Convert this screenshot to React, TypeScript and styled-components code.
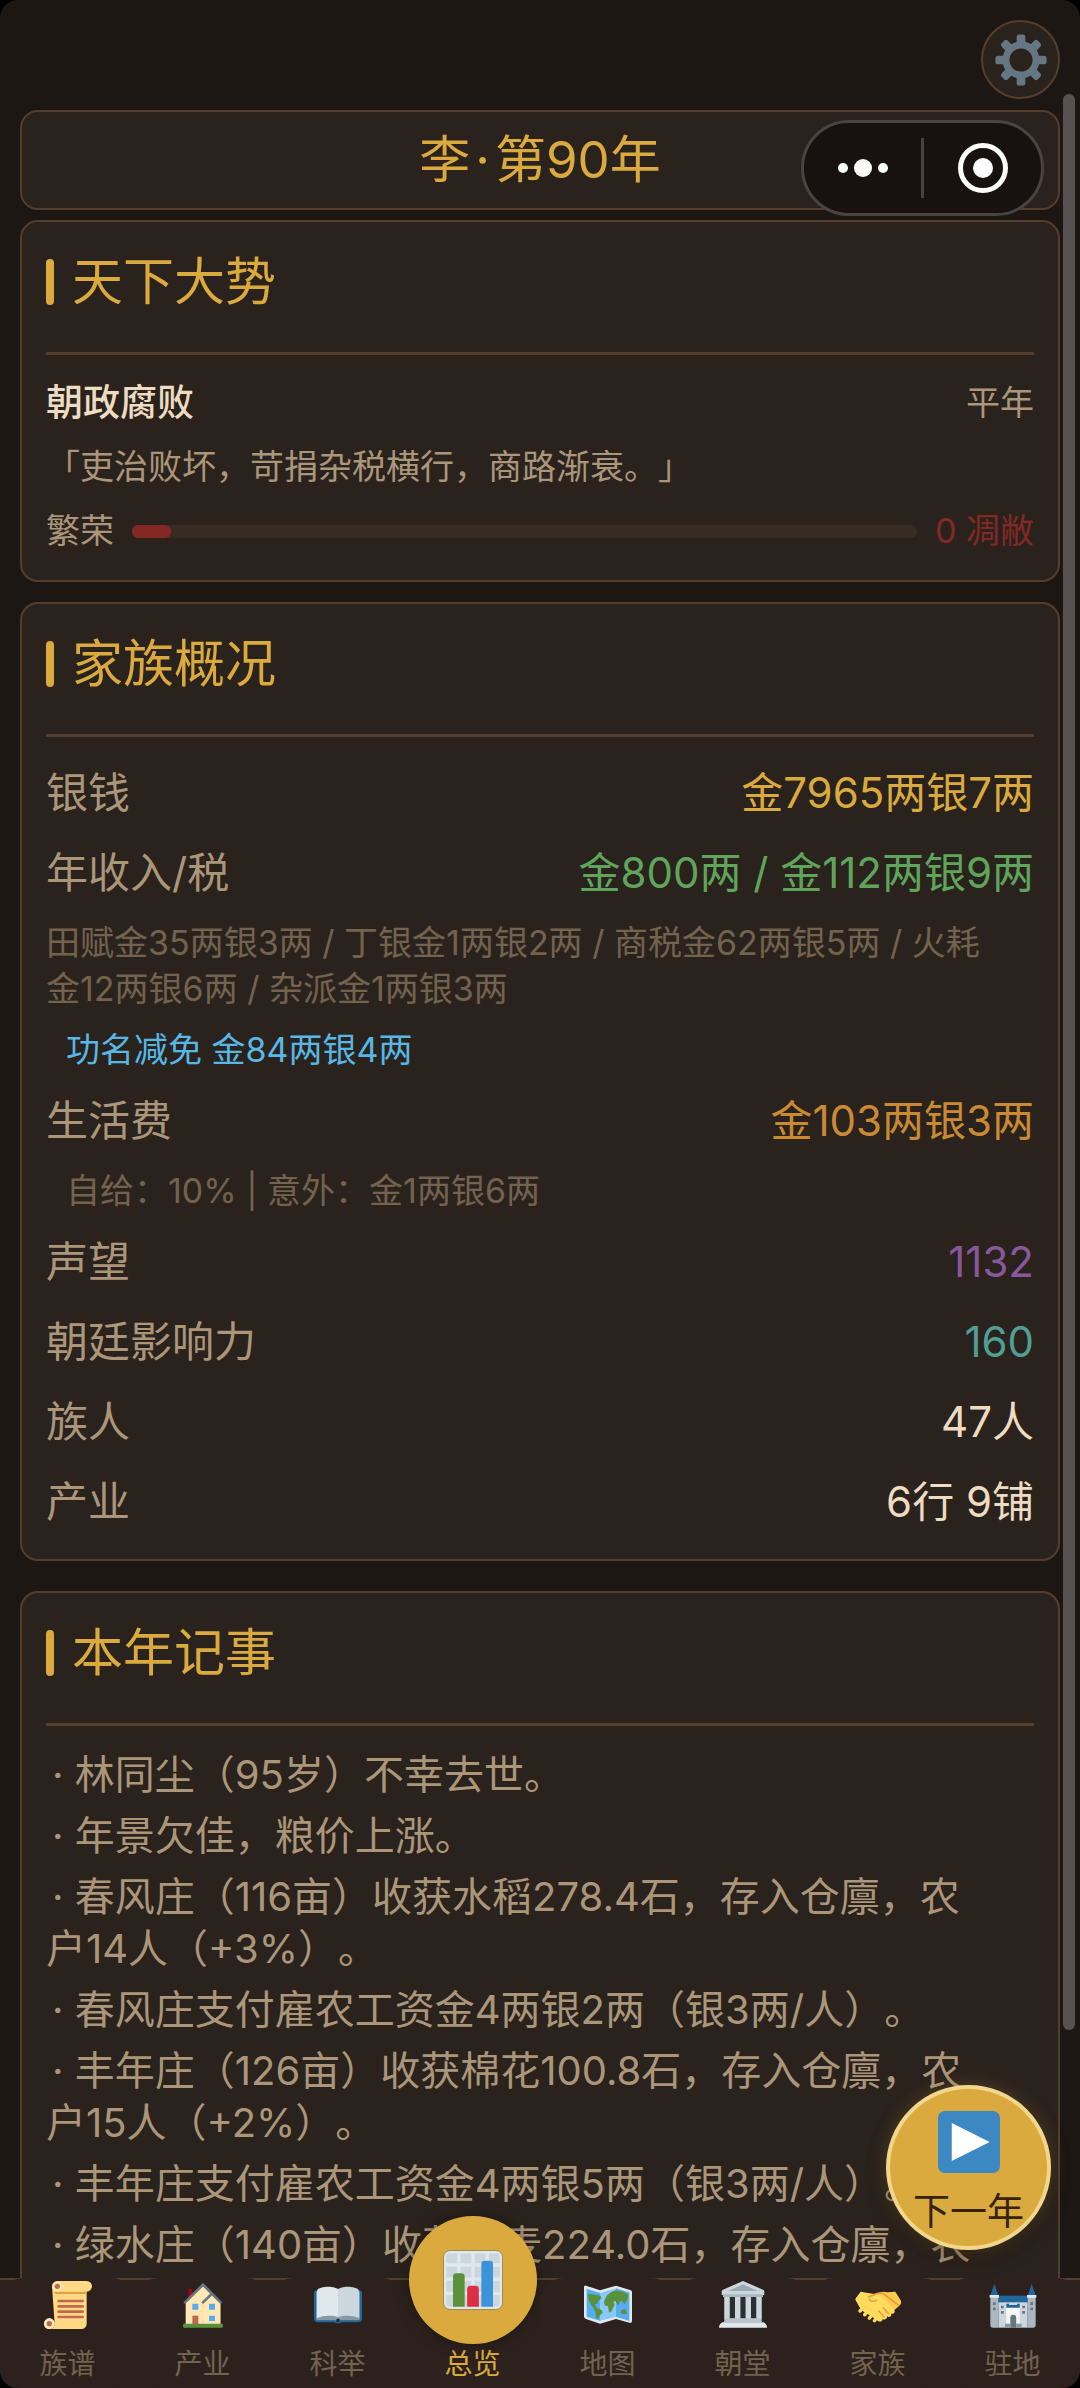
import React from "react";
import styled, { createGlobalStyle, css } from "styled-components";

const color = {
  page: "#1c1713",
  card: "#2a221d",
  line: "#543e2d",
  gold: "#daaa3e",
  label: "#ab967a",
  muted: "#73634e",
  cream: "#eddcc2",
  green: "#5fa55b",
  orange: "#c98a33",
  purple: "#87599b",
  teal: "#509e94",
  blue: "#57b8e6",
  red: "#832823",
};

const GlobalStyle = createGlobalStyle`
  *, *::before, *::after { box-sizing: border-box; }
  body {
    margin: 0;
    background: #000;
    font-family: Inter, "Noto Sans CJK SC", sans-serif;
    text-spacing-trim: space-all;
  }
  button { font-family: inherit; padding: 0; border: 0; cursor: pointer; }
  h1, h2, p, dl, dd, ul { margin: 0; padding: 0; font-weight: 400; }
`;

const Screen = styled.div`
  position: relative;
  display: flex;
  flex-direction: column;
  height: 100vh;
  overflow: hidden;
  border-radius: 18px;
  background: ${color.page};
`;

const Main = styled.main`
  flex: 1;
  min-height: 0;
  display: flex;
  flex-direction: column;
  padding: 20px 20px 0;
  overflow-y: auto;
  scrollbar-width: none;
`;

const TopBar = styled.div`
  display: flex;
  justify-content: flex-end;
  flex-shrink: 0;
  margin-bottom: 11px;
`;

const SettingsButton = styled.button`
  display: grid;
  place-items: center;
  width: 79px;
  height: 79px;
  border: 2px solid ${color.line};
  border-radius: 50%;
  background: ${color.card};
`;

const Panel = styled.section<{ $gap?: number; $grow?: boolean }>`
  flex-shrink: 0;
  margin-bottom: ${(p) => p.$gap ?? 0}px;
  padding: 22px 24px 17px;
  border: 2px solid ${color.line};
  border-radius: 18px;
  background: ${color.card};
  ${(p) =>
    p.$grow &&
    css`
      flex-grow: 1;
      border-bottom: 0;
      border-radius: 18px 18px 0 0;
    `}
`;

const YearBar = styled.header`
  flex-shrink: 0;
  margin-bottom: 10px;
  border: 2px solid ${color.line};
  border-radius: 18px;
  background: ${color.card};
`;

const YearTitle = styled.h1`
  display: flex;
  justify-content: center;
  gap: 5px;
  font-size: 51px;
  line-height: 96px;
  color: ${color.gold};
`;

const PanelHead = styled.div`
  display: flex;
  align-items: center;
  gap: 18px;
  margin-bottom: 16px;
  padding-bottom: 32px;
  border-bottom: 3px solid ${color.line};
  &::before {
    content: "";
    width: 8px;
    height: 46px;
    border-radius: 4px;
    background: ${color.gold};
  }
`;

const PanelTitle = styled.h2`
  font-size: 51px;
  line-height: 76px;
  color: ${color.gold};
`;

const TrendRow = styled.div`
  display: flex;
  align-items: center;
  justify-content: space-between;
  gap: 18px;
  font-size: 34px;
  line-height: 64px;
  color: ${color.label};
`;

const Era = styled.span`
  font-size: 37px;
  font-weight: 500;
  color: ${color.cream};
`;

const Track = styled.div`
  flex: 1;
  height: 13px;
  border-radius: 6px;
  background: #372b22;
`;

const Fill = styled.div`
  height: 100%;
  border-radius: 6px;
  background: ${color.red};
`;

const Verdict = styled.span`
  color: ${color.red};
`;

const StatRow = styled.div`
  display: flex;
  justify-content: space-between;
  font-size: 42px;
  line-height: 80px;
`;

const StatLabel = styled.dt`
  color: ${color.label};
`;

const StatValue = styled.dd<{ $color: string }>`
  color: ${(p) => p.$color};
`;

const Note = styled.p<{ $indent?: boolean; $color?: string }>`
  padding: 7px 40px 8px ${(p) => (p.$indent ? 20 : 0)}px;
  font-size: 34px;
  line-height: 46px;
  color: ${(p) => p.$color ?? color.muted};
`;

const EventList = styled.ul`
  padding: 7px 44px 0 0;
  list-style: none;
  font-size: 40px;
  line-height: 52px;
  color: ${color.label};
`;

const EventItem = styled.li`
  margin-bottom: 9px;
  text-indent: 6px;
`;

const Capsule = styled.div`
  position: absolute;
  top: 120px;
  right: 36px;
  display: grid;
  grid-template-columns: 1fr 3px 1fr;
  align-items: center;
  width: 243px;
  height: 96px;
  border: 3px solid #484441;
  border-radius: 48px;
  background: rgba(22, 17, 15, 0.94);
`;

const CapsuleButton = styled.button`
  display: grid;
  place-items: center;
  height: 90px;
  background: none;
`;

const CapsuleRule = styled.span`
  height: 60px;
  background: #484441;
`;

const ScrollThumb = styled.div`
  position: absolute;
  top: 94px;
  right: 5px;
  bottom: 358px;
  width: 12px;
  border-radius: 6px;
  background: #575252;
`;

const NextYearButton = styled.button`
  position: absolute;
  right: 29px;
  bottom: 138px;
  display: flex;
  flex-direction: column;
  align-items: center;
  gap: 14px;
  width: 165px;
  height: 165px;
  padding-top: 22px;
  border: 4px solid #f0d78c;
  border-radius: 50%;
  background: ${color.gold};
  box-shadow: 0 0 18px rgba(218, 170, 62, 0.25), 0 8px 20px rgba(0, 0, 0, 0.35);
  font-size: 37px;
  line-height: 50px;
  color: #36240a;
  white-space: nowrap;
`;

const NavBar = styled.nav`
  display: grid;
  grid-template-columns: repeat(8, 1fr);
  flex-shrink: 0;
  border-top: 2px solid ${color.line};
  background: #2c211d;
`;

const NavItem = styled.button<{ $active?: boolean }>`
  position: relative;
  display: flex;
  flex-direction: column;
  align-items: center;
  gap: 15px;
  margin-top: -2px;
  padding: 3px 0 4px;
  border-radius: 24px;
  background: #2c211d;
  font-size: 28px;
  line-height: 40px;
  color: ${(p) => (p.$active ? color.gold : color.muted)};
`;

const IconSlot = styled.span`
  display: grid;
  place-items: center;
  height: 48px;
`;

const ActiveDisc = styled.span`
  position: absolute;
  top: -62px;
  left: 50%;
  display: grid;
  place-items: center;
  width: 128px;
  height: 128px;
  margin-left: -64px;
  border-radius: 50%;
  background: ${color.gold};
  box-shadow: 0 0 16px rgba(0, 0, 0, 0.35);
`;

const Svg = ({ size, children }: { size: number; children: React.ReactNode }) => (
  <svg width={size} height={size} viewBox="0 0 36 36" aria-hidden="true">
    {children}
  </svg>
);

const GearIcon = () => (
  <Svg size={52}>
    <g fill="#667784">
      {[0, 45, 90, 135, 180, 225, 270, 315].map((a) => (
        <rect key={a} x="15" y="0.3" width="6" height="9" rx="1.8" transform={`rotate(${a} 18 18)`} />
      ))}
    </g>
    <circle cx="18" cy="18" r="10.4" fill="none" stroke="#667784" strokeWidth="4.8" />
  </Svg>
);

const DotsIcon = () => (
  <svg width="52" height="20" viewBox="0 0 52 20" aria-hidden="true" fill="#fff">
    <circle cx="6" cy="10" r="5" />
    <circle cx="26" cy="10" r="9" />
    <circle cx="46" cy="10" r="5" />
  </svg>
);

const TargetIcon = () => (
  <svg width="50" height="50" viewBox="0 0 50 50" aria-hidden="true">
    <circle cx="25" cy="25" r="22.5" fill="none" stroke="#fff" strokeWidth="5" />
    <circle cx="25" cy="25" r="10" fill="#fff" />
  </svg>
);

const PlayIcon = () => (
  <Svg size={62}>
    <rect width="36" height="36" rx="4" fill="#3b88c3" />
    <path d="M8 7l22 11L8 29z" fill="#fff" />
  </Svg>
);

const ScrollIcon = () => (
  <Svg size={48}>
    <circle cx="4" cy="32" r="4" fill="#ffe8b6" />
    <path d="M6 4h26v28a4 4 0 0 1-4 4H4c3 0 4-2 4-4L6 4z" fill="#ffd983" />
    <path d="M8 8h24v1.8H8z" fill="#e39f3d" />
    <path d="M10 0h22a4 4 0 0 1 0 8H10z" fill="#ffd983" />
    <circle cx="10" cy="4" r="4" fill="#ffe8b6" />
    <circle cx="10" cy="4" r="2" fill="#c1694f" />
    <circle cx="4" cy="32" r="4" fill="#ffe8b6" />
    <circle cx="4" cy="32" r="2" fill="#c1694f" />
    <path d="M11 15h18M11 19h18M11 23h18M11 27h18" stroke="#c1694f" strokeWidth="2" strokeLinecap="round" />
  </Svg>
);

const HouseIcon = () => (
  <Svg size={48}>
    <path d="M7 6h3v8H7z" fill="#a0041e" />
    <path d="M5 15L18 2l13 13v18H5z" fill="#ffe8b6" />
    <path d="M17.5 15.5L24 10v23h-6.500z" fill="#ffd983" opacity="0.6" />
    <path d="M18.500 16L25 9.500l6 6V33H18.500z" fill="#ffe8b6" />
    <path d="M4.500 16L18 2.800l13.200 13.200M18 16l6.500-6.300" fill="none" stroke="#66757f" strokeWidth="2" strokeLinecap="round" />
    <path d="M10 17h4.500v4.500H10zM22.500 17H27v4.500h-4.500zM22.500 26H27v4h-4.500z" fill="#55acee" />
    <path d="M10 26h4.500v7H10z" fill="#c1694f" />
    <rect x="3" y="32" width="30" height="3" rx="1" fill="#5c913b" />
  </Svg>
);

const BookIcon = () => (
  <Svg size={48}>
    <path d="M2 7h32a2 2 0 0 1 2 2v19a3 3 0 0 1-3 3H20.500c-.5 1.200-4.500 1.200-5 0H3a3 3 0 0 1-3-3V9a2 2 0 0 1 2-2z" fill="#226699" />
    <path d="M2 8h32v21H2z" fill="#99aab5" />
    <path d="M3 6c5-2.500 11-2 15 0v21c-4-1.500-10-1.500-16 1V8z" fill="#e1e8ed" />
    <path d="M33 6c-5-2.500-11-2-15 0v21c4-1.500 10-1.500 16 1V8z" fill="#ccd6dd" />
    <path d="M2 28c6-2.500 12-2.500 16 0 4-2.500 10-2.500 16 0v1.500H20l-2 1-2-1H2z" fill="#8899a6" />
    <circle cx="18" cy="29.500" r="1.400" fill="#292f33" />
  </Svg>
);

const ChartIcon = () => (
  <Svg size={60}>
    <rect x="0.300" y="0.300" width="35.400" height="35.400" rx="4" fill="#e1e8ed" stroke="#a08a4f" strokeWidth="0.600" />
    <path d="M4 2h4.500v6H2V4a2 2 0 0 1 2-2zM10.500 2h6.500v6h-6.500zM19 2h6.500v6H19zM27.500 2H32a2 2 0 0 1 2 2v4h-6.500zM2 10h6.500v6.500H2zM10.500 10h6.500v6.500h-6.500zM19 10h6.500v6.500H19zM27.500 10H34v6.500h-6.500zM2 18.500h6.500V25H2zM10.500 18.500h6.500V25h-6.500zM19 18.500h6.500V25H19zM27.500 18.500H34V25h-6.500zM2 27h6.500v7H4a2 2 0 0 1-2-2zM10.500 27h6.500v7h-6.500zM19 27h6.500v7H19zM27.500 27H34v5a2 2 0 0 1-2 2h-4.500z" fill="#ccd6dd" />
    <path d="M6 34V16a2 2 0 0 1 2-2h3a2 2 0 0 1 2 2v18z" fill="#5c913b" />
    <path d="M14.500 34V23.500a2 2 0 0 1 2-2h3a2 2 0 0 1 2 2V34z" fill="#dd2e44" />
    <path d="M23 34V8.500a2 2 0 0 1 2-2h3a2 2 0 0 1 2 2V34z" fill="#3b94d9" />
  </Svg>
);

const MapIcon = () => (
  <Svg size={48}>
    <path d="M1.500 4L12 7.500 24 4l11 3.500c.6.200 1 .8 1 1.500v21.500c0 1-1 1.700-2 1.400L24 29l-12 3.500L1.500 29C.6 28.700 0 28 0 27V5.300C0 4.300.6 3.700 1.500 4z" fill="#e1e8ed" transform="translate(0 -0.500)" />
    <path d="M2 5.800l10 3.200v20.800L2 26.800z" fill="#55acee" />
    <path d="M12 9l12-3.500v21.300l-12 3z" fill="#88c9f9" />
    <path d="M24 5.500l10 3.200V30l-10-3.200z" fill="#55acee" />
    <path d="M3 9.500l5 .8 4.500.7.500 2-2.500 2-.5 2-2 .5 2 3 3.500 1.500.5 2-2 1.500-1.500 3-1.500-1-.5-4-1-2.500-2-3-2-3.500zM17 11l3-2.500 4-1.500 5 1 4 1.800v3l-1.500 2.500-1 2.500-2-3-1.500.5-1.500 3-2-3.500-1.500 1 1 2-1.500 3-1.500 3-1.500-1-.5-4-2.500-.5-.5-3zM28 22l3-1 1.500 3.500-3 .5-2-1z" fill="#5c913b" />
  </Svg>
);

const HallIcon = () => (
  <Svg size={48}>
    <path d="M4 10h28v20H4z" fill="#66757f" />
    <path d="M8 12h4v16H8zM16 12h4v16h-4zM24 12h4v16h-4z" fill="#292f33" />
    <path d="M4 11h4v18H4zM12 11h4v18h-4zM20 11h4v18h-4zM28 11h4v18h-4z" fill="#ccd6dd" />
    <path d="M18 0l15 6.500c.8.400 1 1 1 1.500v2.500H2V8c0-.5.200-1.100 1-1.500z" fill="#ccd6dd" />
    <path d="M18 2.500l11 5H7z" fill="#9aaab4" />
    <path d="M3 10h30v2H3z" fill="#aab8c2" />
    <path d="M5 28h26l1.500 3H3.500z" fill="#b8c5cd" />
    <path d="M2.500 31h31c1.500 1 2.500 2 2.500 4H0c0-2 1-3 2.500-4z" fill="#e1e8ed" />
  </Svg>
);

const HandshakeIcon = () => (
  <Svg size={48}>
    <path d="M16 10c3-2 6-2.500 9-1.500l6-.5 4 6.500c.8 1.500.3 3-1 4l-8 7-9-9z" fill="#ffcc4d" />
    <path d="M5 8l9 1.500 5 .5 5 5 6 6.500c1.500 2-.5 3.700-2.200 2.800.8 2-1.300 3.400-3 2.200.3 2-1.800 3-3.300 2-.2 2-2.200 2.400-3.500 1.500L13 26.500 5.500 22 1.500 15C.8 13.500 1 13 2 12z" fill="#ffdc5d" />
    <path d="M11 12l6-2.500c4-1.500 6 .5 9 3l7 5.500" fill="none" stroke="#ef9645" strokeWidth="1.300" strokeLinecap="round" />
    <path d="M17 14.500c-2.500 1-5 1-5.500-.8M22 20l4 4.500M18.500 22.500l4 4.500" fill="none" stroke="#ef9645" strokeWidth="1.100" strokeLinecap="round" />
    <path d="M6 22l2.500-2.500M9 25l3-3.500M12.500 27.500l2.500-3M16 29.500l1.500-2" stroke="#ef9645" strokeWidth="1" strokeLinecap="round" />
    <path d="M4.500 22.500l3-3M8 25.300l3-3.300M11.500 27.800l2.800-3M15.300 29.800l1.500-2" stroke="#ffdc5d" strokeWidth="2.600" strokeLinecap="round" />
  </Svg>
);

const CastleIcon = () => (
  <Svg size={48}>
    <path d="M7 11h22v8H7z" fill="#226699" />
    <path d="M4 2l3 9H1zM32 2l3 9h-6z" fill="#226699" />
    <path d="M7 16h22v19H7z" fill="#ccd6dd" />
    <path d="M1 11h6v24H3a2 2 0 0 1-2-2zM29 11h6v22a2 2 0 0 1-2 2h-4z" fill="#aab8c2" />
    <path d="M0.500 10.500h7v2h-7zM28.500 10.500h7v2h-7z" fill="#e1e8ed" />
    <path d="M13 19h10v13H13z" fill="#f5f8fa" />
    <path d="M13 17h2v1h6v-1h2v3H13z" fill="#226699" />
    <path d="M16 35v-7.500a2.200 2.200 0 0 1 4.400 0V35z" fill="#66757f" />
    <path d="M12 32h4v3h-4zM20.400 32h4v3h-4z" fill="#8899a6" />
    <path d="M3 16h2v2H3zM3 20h2v2H3zM31 16h2v2h-2zM31 20h2v2h-2zM9 18.500h2v2H9zM9 22.500h2v2H9zM25 18.500h2v2h-2zM25 22.500h2v2h-2z" fill="#66757f" />
  </Svg>
);

const navItems = [
  { label: "族谱", Icon: ScrollIcon },
  { label: "产业", Icon: HouseIcon },
  { label: "科举", Icon: BookIcon },
  { label: "总览", Icon: ChartIcon, active: true },
  { label: "地图", Icon: MapIcon },
  { label: "朝堂", Icon: HallIcon },
  { label: "家族", Icon: HandshakeIcon },
  { label: "驻地", Icon: CastleIcon },
];

const events = [
  "林同尘（95岁）不幸去世。",
  "年景欠佳，粮价上涨。",
  "春风庄（116亩）收获水稻278.4石，存入仓廪，农户14人（+3%）。",
  "春风庄支付雇农工资金4两银2两（银3两/人）。",
  "丰年庄（126亩）收获棉花100.8石，存入仓廪，农户15人（+2%）。",
  "丰年庄支付雇农工资金4两银5两（银3两/人）。",
  "绿水庄（140亩）收获小麦224.0石，存入仓廪，农",
];

const prosperityFill = 5;

const Stat = ({ label, value, tone }: { label: string; value: string; tone: string }) => (
  <StatRow>
    <StatLabel>{label}</StatLabel>
    <StatValue $color={tone}>{value}</StatValue>
  </StatRow>
);

const Heading = ({ children }: { children: React.ReactNode }) => (
  <PanelHead>
    <PanelTitle>{children}</PanelTitle>
  </PanelHead>
);

export default function App() {
  return (
    <Screen>
      <GlobalStyle />
      <Main>
        <TopBar>
          <SettingsButton type="button" aria-label="设置">
            <GearIcon />
          </SettingsButton>
        </TopBar>

        <YearBar>
          <YearTitle>
            <span>李</span>
            <span>·</span>
            <span>第90年</span>
          </YearTitle>
        </YearBar>

        <Panel $gap={20}>
          <Heading>天下大势</Heading>
          <TrendRow>
            <Era>朝政腐败</Era>
            <span>平年</span>
          </TrendRow>
          <TrendRow as="p">「吏治败坏，苛捐杂税横行，商路渐衰。」</TrendRow>
          <TrendRow>
            <span>繁荣</span>
            <Track>
              <Fill style={{ width: `${prosperityFill}%` }} />
            </Track>
            <Verdict>0 凋敝</Verdict>
          </TrendRow>
        </Panel>

        <Panel $gap={30}>
          <Heading>家族概况</Heading>
          <dl>
            <Stat label="银钱" value="金7965两银7两" tone={color.gold} />
            <Stat label="年收入/税" value="金800两 / 金112两银9两" tone={color.green} />
          </dl>
          <Note>田赋金35两银3两 / 丁银金1两银2两 / 商税金62两银5两 / 火耗金12两银6两 / 杂派金1两银3两</Note>
          <Note $indent $color={color.blue}>功名减免 金84两银4两</Note>
          <dl>
            <Stat label="生活费" value="金103两银3两" tone={color.orange} />
          </dl>
          <Note $indent>自给：10% | 意外：金1两银6两</Note>
          <dl>
            <Stat label="声望" value="1132" tone={color.purple} />
            <Stat label="朝廷影响力" value="160" tone={color.teal} />
            <Stat label="族人" value="47人" tone={color.cream} />
            <Stat label="产业" value="6行 9铺" tone={color.cream} />
          </dl>
        </Panel>

        <Panel $grow>
          <Heading>本年记事</Heading>
          <EventList>
            {events.map((text) => (
              <EventItem key={text}>{`· ${text}`}</EventItem>
            ))}
          </EventList>
        </Panel>
      </Main>

      <ScrollThumb aria-hidden="true" />

      <Capsule>
        <CapsuleButton type="button" aria-label="更多">
          <DotsIcon />
        </CapsuleButton>
        <CapsuleRule />
        <CapsuleButton type="button" aria-label="关闭">
          <TargetIcon />
        </CapsuleButton>
      </Capsule>

      <NextYearButton type="button">
        <PlayIcon />
        下一年
      </NextYearButton>

      <NavBar>
        {navItems.map(({ label, Icon, active }) => (
          <NavItem key={label} type="button" $active={active} aria-current={active ? "page" : undefined}>
            <IconSlot>
              {active ? (
                <ActiveDisc>
                  <Icon />
                </ActiveDisc>
              ) : (
                <Icon />
              )}
            </IconSlot>
            {label}
          </NavItem>
        ))}
      </NavBar>
    </Screen>
  );
}
